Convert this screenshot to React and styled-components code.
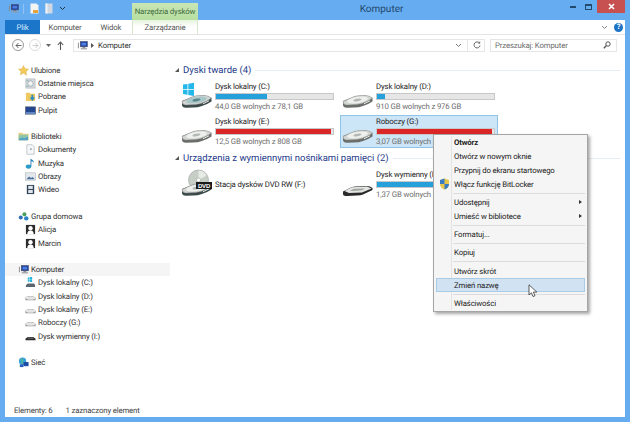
import React from "react";
import styled, { createGlobalStyle } from "styled-components";

const Global = createGlobalStyle`
  html, body { margin: 0; padding: 0; width: 630px; height: 422px; overflow: hidden; }
  * { box-sizing: border-box; }
  body { font-family: Roboto, "Noto Sans", sans-serif; font-size: 7.8px; letter-spacing: -0.15px; color: #333; text-rendering: geometricPrecision; }
`;

const Win = styled.div`
  position: relative; width: 630px; height: 422px; background: #66acf0;
  display: flex; flex-direction: column; padding: 0 5px 5px; overflow: hidden;
`;
const TitleBar = styled.div`display: flex; height: 20px; flex: none; margin-right: 0;`;
const Quick = styled.div`display: flex; align-items: center; width: 127px; padding-left: 3px; padding-bottom: 3px; gap: 6px;`;
const QuickSep = styled.div`width: 1px; height: 10px; background: #8fc3f3; margin-left: -2px;`;
const ToolTab = styled.div`
  width: 66px; height: 17px; margin-top: 3px; background: linear-gradient(#c9e6b4, #b7dfa2);
  color: #3f6a3c; display: flex; align-items: center; justify-content: center; white-space: nowrap;
`;
const Title = styled.div`
  flex: 1; display: flex; justify-content: center; align-items: center; padding-bottom: 2px;
  font-size: 10px; letter-spacing: 0; color: #24486e;
`;
const Controls = styled.div`display: flex; width: 60px; justify-content: flex-end; height: 13px;`;
const Ctl = styled.div`
  width: ${p => p.$w}px; display: flex; align-items: center; justify-content: center;
  background: ${p => p.$bg || "transparent"};
`;
const Ribbon = styled.div`
  display: flex; align-items: stretch; height: 15px; flex: none; background: #fff;
  border-bottom: 1px solid #e4e4e4;
`;
const RTab = styled.div`
  width: ${p => p.$w}px; display: flex; align-items: center; justify-content: center;
  color: ${p => p.$fg || "#555"}; background: ${p => p.$bg || "transparent"};
`;
const CtxTab = styled(RTab)`
  background: linear-gradient(#e6f3dc, #fff 45%);
  border-left: 1px solid #d8e8cc; border-right: 1px solid #d8e8cc;
`;
const RibbonEnd = styled.div`flex: 1; display: flex; justify-content: flex-end; align-items: center; gap: 6px; padding-right: 2px;`;
const Help = styled.div`
  width: 9px; height: 9px; border-radius: 50%; background: #1c72c4; color: #fff; font-size: 7.5px; font-weight: 700;
  display: flex; align-items: center; justify-content: center; line-height: 1;
`;
const AddrRow = styled.div`display: flex; align-items: center; height: 20px; flex: none; background: #fff;`;
const Nav = styled.div`width: 68px; display: flex; align-items: center; padding-left: 7px;`;
const NavCircle = styled.div`
  width: 12px; height: 12px; border-radius: 50%; flex: none; margin-right: 5px;
  border: 1px solid ${p => p.$off ? "#dcdcdc" : "#9a9a9a"};
  display: flex; align-items: center; justify-content: center;
`;
const AddrBox = styled.div`
  width: 412px; height: 13px; border: 1px solid #e6e6e6; display: flex; align-items: center; padding-left: 3px; gap: 3px;
`;
const AddrText = styled.span`color: #333; margin-left: 1px;`;
const AddrEnd = styled.div`margin-left: auto; display: flex; align-items: center; gap: 5px; padding-right: 3px; height: 100%;`;
const AddrSep = styled.div`width: 1px; height: 100%; background: #e6e6e6;`;
const Search = styled.div`
  width: 127px; height: 13px; margin-left: 5px; border: 1px solid #e6e6e6; display: flex; align-items: center;
  justify-content: space-between; padding: 0 5px 0 4px; color: #6d6d6d;
`;
const Main = styled.div`flex: 1; display: flex; background: #fff; min-height: 0;`;
const Side = styled.div`width: 165px; flex: none; padding-top: 8.5px; display: flex; flex-direction: column; gap: 13.3px;`;
const SideGroup = styled.div`display: flex; flex-direction: column;`;
const SideRow = styled.div`
  height: 13.3px; display: flex; align-items: center; gap: 2px;
  padding-left: ${p => p.$child ? 20 : 13}px;
  background: ${p => p.$sel ? "#f5f5f5" : "transparent"};
  color: #333; white-space: nowrap;
`;
const Content = styled.div`flex: 1; padding: 8.5px 5px 0 4px; display: flex; flex-direction: column;`;
const GroupHead = styled.div`
  display: flex; align-items: center; height: 13px; gap: 4px; padding-left: 1px;
  color: #1e3a8a; font-size: 9.5px; letter-spacing: 0; white-space: nowrap;
`;
const Tri = styled.div`width: 0; height: 0; border-left: 4px solid transparent; border-bottom: 4px solid #555;`;
const HeadLine = styled.div`flex: 1; height: 1px; background: #e8edf5;`;
const Grid = styled.div`display: grid; grid-template-columns: 158px 158px; column-gap: 3px; padding: 3px 0 3.5px 5px; row-gap: 2.5px;`;
const Tile = styled.div`
  height: 33px; display: flex; align-items: center; gap: 2px; padding-left: 1px;
  background: ${p => p.$sel ? "#cde6f7" : "transparent"};
  border: 1px solid ${p => p.$sel ? "#8fc4e8" : "transparent"};
`;
const TileText = styled.div`flex: 1; display: flex; flex-direction: column; justify-content: center; gap: 1px; padding-right: 3px;`;
const Name = styled.div`color: #222; line-height: 11px; white-space: nowrap;`;
const Bar = styled.div`width: 119px; height: 7px; background: #e6e6e6; border: 1px solid #c8c8c8; display: flex;`;
const Fill = styled.div`height: 100%; background: ${p => p.$red ? "#da2626" : "#26a0da"};`;
const Sub = styled.div`color: #6d6d6d; line-height: 11px; white-space: nowrap;`;
const Status = styled.div`height: 17px; flex: none; background: #fff; display: flex; align-items: center; padding: 3px 0 0 9px; gap: 13px; color: #444;`;

const Menu = styled.div`
  position: absolute; left: 433px; top: 134px; width: 155px; background: #f5f5f5; border: 1px solid #a5a5a5;
  box-shadow: 2px 2px 3px rgba(0,0,0,.35); padding: 0 2px 1px; display: flex; flex-direction: column; color: #222;
`;
const Gutter = styled.div`position: absolute; left: 17px; top: 1px; bottom: 1px; width: 1px; background: #e3e3e3;`;
const MenuItem = styled.div`
  position: relative; height: 14px; display: flex; align-items: center; padding-left: 18px; white-space: nowrap;
  font-weight: ${p => p.$b ? 700 : 400};
  ${p => p.$hover ? "background: #d1e2f2; outline: 1px solid #a8cbe8; outline-offset: -1px;" : ""}
`;
const MenuSep = styled.div`height: ${p => p.$h || 5}px; display: flex; align-items: center; padding-left: 17px;
  &::after { content: ""; flex: 1; height: 1px; background: #dcdcdc; }
`;
const Arrow = styled.div`
  position: absolute; right: 3px; top: 5px; width: 0; height: 0;
  border-left: 3px solid #333; border-top: 2.5px solid transparent; border-bottom: 2.5px solid transparent;
`;
const Shield = styled.svg`position: absolute; left: 3px; top: 1px;`;
const Cursor = styled.svg`position: absolute; left: 528px; top: 284px;`;

const Drive = ({ kind }) => (
  <svg width="32" height="31" viewBox="0 0 32 31" style={{ flex: "none" }}>
    {kind === "dvd" && <>
      <circle cx="17.500" cy="11" r="10" fill="#c6cec6" stroke="#8a8f8a" strokeWidth=".5" />
      <path d="M17.500 1.500a9.500 9.500 0 0 1 8 5l-8 4.500z" fill="#e6ebe6" />
      <circle cx="17.500" cy="11" r="2" fill="#fff" stroke="#999" strokeWidth=".5" />
    </>}
    {kind === "win" && <g fill="#23b7ea">
      <path d="M2 3.600l4.500-.7v5H2zM7.300 2.700l5.700-.9v6.100H7.300zM2 8.800h4.500v5L2 13.100zM7.300 8.800H13v6.100l-5.700-.9z" />
    </g>}
    {kind === "usb" ? <>
      <path d="M1 22.500 L9 18.500 Q11 17.500 14 17.500 L25 17 Q28 17 30.500 19 L30.500 21 L21 25.500 Q19 26.500 15 26.500 L5 27 Q1 27 1 25Z" fill="#2a2a2a" />
      <path d="M2.500 22 L10 18.300 L25 17.600 L29.500 19.500 L20 23.500 L7 24Z" fill="#e4e6e4" />
      <path d="M8 21.800 L12 19.800 L23 19.400 L20 21.200 L10 22Z" fill="#a2a4a2" />
    </> : <>
      <path d="M1 20 L11 16 Q13 15 16 14.800 L23 14.400 Q27 14.200 30.500 17 L30.500 20.500 Q26 23.500 21 25 Q17 26.500 12 26.500 L5 26.800 Q1 26.500 1 24Z" fill={kind === "win" || kind === "dvd" ? "#3d4a4c" : "#6a6d6a"} />
      <path d="M1 20.500 L11 16 Q13 15 16 14.800 L23 14.400 Q27 14.200 30.500 17 Q26 20.500 20 22.500 Q15 23.800 9 23.800 L5 24 Q1 23.600 1 20.500Z" fill="#d2d5d2" stroke="#8c8f8c" strokeWidth=".4" />
      <ellipse cx="15.500" cy="19" rx="10.500" ry="3" fill={kind === "win" ? "#a7c7c9" : "#eef0ee"} transform="rotate(-9 15.500 19)" />
      <ellipse cx="15.500" cy="19" rx="4" ry="1.300" fill={kind === "win" ? "#5c8387" : "#b4b7b4"} transform="rotate(-9 15.500 19)" />
      <path d="M22 22.800 L28 19.800" stroke="#e4e6e4" strokeWidth="1" />
    </>}
    {kind === "dvd" && <>
      <rect x="15" y="13" width="16" height="7" fill="#1a1a1a" />
      <text x="23" y="18.800" fontSize="6" fontWeight="700" textAnchor="middle" fill="#fff" fontFamily="Liberation Sans">DVD</text>
    </>}
  </svg>
);

const Ico = ({ children, s = 11 }) => (
  <svg width={s} height={s} viewBox="0 0 12 12" style={{ flex: "none" }}>{children}</svg>
);
const PC = () => <Ico><path d="M1 3h1v6H1z" fill="#888" /><rect x="3.500" y="1.500" width="8" height="6" fill="#1d3f9e" stroke="#555" strokeWidth=".5" /><rect x="5" y="3" width="5" height="3" fill="#4f7de0" /><rect x="6" y="8" width="3" height="1" fill="#666" /><rect x="4" y="9" width="7" height="1.200" fill="#999" /></Ico>;
const icons = {
  star: <Ico><path d="M6 .6l1.700 3.500 3.800.5-2.800 2.700.7 3.900L6 8.800l-3.400 1.900.7-3.900L.5 4.600l3.800-.5z" fill="#f3cb5a" stroke="#c99a2c" strokeWidth=".4" /></Ico>,
  recent: <Ico><rect x="1" y="1" width="10" height="10" fill="#d6dbdf" stroke="#8f979e" strokeWidth=".5" /><circle cx="6" cy="6" r="3" fill="#f3f3f3" stroke="#789" strokeWidth=".6" /><path d="M1 3h3M1 9h3" stroke="#7aa" strokeWidth=".7" /></Ico>,
  down: <Ico><path d="M1 2h4l1 1h5v8H1z" fill="#eec95f" /><path d="M7 4v3H5l3 4 3-4H9V4z" fill="#2a8dc0" /></Ico>,
  desk: <Ico><rect x=".5" y="2" width="11" height="8" fill="#23488f" stroke="#445" strokeWidth=".5" /><path d="M1 8h10v1.500H1z" fill="#7da3e0" /></Ico>,
  lib: <Ico><path d="M.5 2h4l1 1h6v7H.5z" fill="#e5cf82" /><path d="M1 4h10l-1 6H.5z" fill="#8fc6ab" /><path d="M1 9l3-2 3 1 4-2v4H1z" fill="#54a3c7" /></Ico>,
  doc: <Ico><path d="M2 .8h6l2 2v8.400H2z" fill="#f5f7f9" stroke="#9aa3ab" strokeWidth=".6" /><path d="M6 4l1.500 1.500L6 7z" fill="#678" /></Ico>,
  music: <Ico><ellipse cx="3.800" cy="9.400" rx="3" ry="2.200" fill="#2b9cc8" /><path d="M6 9V.8c2 1 4 2 3.600 4.700C9 4 8 3.500 7 3.500V9z" fill="#2b7fb8" /></Ico>,
  pics: <Ico><rect x=".5" y="2" width="11" height="8" fill="#e4e8ec" stroke="#9aa3ab" strokeWidth=".5" /><path d="M1.500 9l3-3 2 1.500 2-1L10.500 9z" fill="#476f9a" /></Ico>,
  video: <Ico><rect x="2" y="1" width="8" height="10" fill="#2f4257" /><rect x="3.500" y="2" width="5" height="3.400" fill="#dfe5ea" /><rect x="3.500" y="6.500" width="5" height="3.400" fill="#dfe5ea" /></Ico>,
  home: <Ico><circle cx="3" cy="7" r="2.200" fill="#2f6fb8" /><circle cx="7" cy="3.500" r="2.200" fill="#48a05a" /><circle cx="9" cy="8" r="2.400" fill="#2b84c8" /></Ico>,
  user: <Ico><rect x="1" y="1" width="10" height="10" fill="#2b2b2b" /><circle cx="6" cy="4.600" r="2.400" fill="#fff" /><path d="M2.500 11c0-3 1.500-4 3.500-4s3.500 1 3.500 4z" fill="#fff" /></Ico>,
  pc: <PC />,
  sysd: <Ico><path d="M3 .5l2-.3v2.400H3zM5.500 0l2.300-.2v2.800H5.500zM3 3h2v2.200H3zM5.500 3h2.300v2.400H5.500z" fill="#22b4dc" /><path d="M1 9l2-2h7l1 2v2H1z" fill="#5a6570" /></Ico>,
  disk: <Ico><path d="M.5 8c0-1.500 2-2.500 5.500-2.500s5.500 1 5.500 2.500v2H.5z" fill="#8d8f8d" /><ellipse cx="6" cy="7.600" rx="5.400" ry="2" fill="#e3e4e3" /></Ico>,
  usb: <Ico><path d="M.5 8.500L3 6.500h6l2.500 2v1.500H.5z" fill="#2b2b2b" /><path d="M3 7.400h6v.6H3z" fill="#bbb" /></Ico>,
  net: <Ico><circle cx="5" cy="4.500" r="4" fill="#36a2d6" /><path d="M3 2l2 1-1 3 2 2" stroke="#6fbf5e" fill="none" /><rect x="6" y="5.500" width="5.500" height="4.500" fill="#1e4ba3" /><rect x="2" y="8" width="4" height="3" fill="#255fbf" /></Ico>,
};

const groups = [
  [["star", "Ulubione"], ["recent", "Ostatnie miejsca", 1], ["down", "Pobrane", 1], ["desk", "Pulpit", 1]],
  [["lib", "Biblioteki"], ["doc", "Dokumenty", 1], ["music", "Muzyka", 1], ["pics", "Obrazy", 1], ["video", "Wideo", 1]],
  [["home", "Grupa domowa"], ["user", "Alicja", 1], ["user", "Marcin", 1]],
  [["pc", "Komputer", 0, 1], ["sysd", "Dysk lokalny (C:)", 1], ["disk", "Dysk lokalny (D:)", 1], ["disk", "Dysk lokalny (E:)", 1], ["disk", "Roboczy (G:)", 1], ["usb", "Dysk wymienny (I:)", 1]],
  [["net", "Sieć"]],
];

const hard = [
  { kind: "win", name: "Dysk lokalny (C:)", pct: 44, sub: "44,0 GB wolnych z 78,1 GB" },
  { kind: "hdd", name: "Dysk lokalny (D:)", pct: 7, sub: "910 GB wolnych z 976 GB" },
  { kind: "hdd", name: "Dysk lokalny (E:)", pct: 98, red: 1, sub: "12,5 GB wolnych z 808 GB" },
  { kind: "hdd", name: "Roboczy (G:)", pct: 98, red: 1, sub: "3,07 GB wolnych z 97,6 GB", sel: 1 },
];

const DriveTile = ({ d }) => (
  <Tile $sel={d.sel}>
    <Drive kind={d.kind} />
    <TileText>
      <Name>{d.name}</Name>
      {d.pct != null && <Bar><Fill $red={d.red} style={{ width: `${d.pct}%` }} /></Bar>}
      {d.sub && <Sub>{d.sub}</Sub>}
    </TileText>
  </Tile>
);

const Chevron = ({ c = "#777" }) => <svg width="7" height="5" viewBox="0 0 7 5"><path d="M1 1l2.500 2.500L6 1" fill="none" stroke={c} strokeWidth="1" /></svg>;

export default function App() {
  return (
    <Win>
      <Global />
      <TitleBar>
        <Quick>
          <PC />
          <QuickSep />
          <svg width="9" height="11" viewBox="0 0 9 11"><path d="M.5.5h6l2 2v8h-8z" fill="#f4f4f4" /><path d="M3 7h5v3H3z" fill="#e8a33c" /></svg>
          <svg width="8" height="11" viewBox="0 0 8 11"><path d="M.5.5h7v10h-7z" fill="#cfd8e2" /><path d="M.5.5h2v10h-2z" fill="#eef2f6" /></svg>
          <Chevron c="#234" />
        </Quick>
        <ToolTab>Narzędzia dysków</ToolTab>
        <Title>Komputer</Title>
        <Controls>
          <Ctl $w={15}><svg width="6" height="2"><rect width="6" height="2" fill="#234a6d" /></svg></Ctl>
          <Ctl $w={17}><svg width="7" height="6"><rect x=".5" y=".5" width="6" height="5" fill="none" stroke="#234a6d" /><rect width="7" height="2" fill="#234a6d" /></svg></Ctl>
          <Ctl $w={28} $bg="#c75050"><svg width="7" height="7" viewBox="0 0 7 7"><path d="M1 1l5 5M6 1L1 6" stroke="#fff" strokeWidth="1.600" /></svg></Ctl>
        </Controls>
      </TitleBar>
      <Ribbon>
        <RTab $w={35} $bg="#1b76c9" $fg="#d8eafa">Plik</RTab>
        <RTab $w={50}>Komputer</RTab>
        <RTab $w={42}>Widok</RTab>
        <CtxTab $w={66}>Zarządzanie</CtxTab>
        <RibbonEnd><Chevron c="#8a8a8a" /><Help>?</Help></RibbonEnd>
      </Ribbon>
      <AddrRow>
        <Nav>
          <NavCircle><svg width="7" height="7" viewBox="0 0 7 7"><path d="M6.500 3.500H1M3.500 1L1 3.500 3.500 6" fill="none" stroke="#666" /></svg></NavCircle>
          <NavCircle $off><svg width="7" height="7" viewBox="0 0 7 7"><path d="M.5 3.500H6M3.500 1L6 3.500 3.500 6" fill="none" stroke="#ccc" /></svg></NavCircle>
          <svg width="5" height="3" viewBox="0 0 5 3" style={{ marginRight: 6 }}><path d="M0 0h5L2.500 3z" fill="#666" /></svg>
          <svg width="7" height="9" viewBox="0 0 7 9"><path d="M3.500 9V1.500M.8 4l2.700-3 2.700 3" fill="none" stroke="#555" strokeWidth="1.100" /></svg>
        </Nav>
        <AddrBox>
          <PC />
          <svg width="3" height="5" viewBox="0 0 3 5"><path d="M0 0l3 2.500L0 5z" fill="#555" /></svg>
          <AddrText>Komputer</AddrText>
          <AddrEnd>
            <Chevron />
            <AddrSep />
            <svg width="8" height="8" viewBox="0 0 8 8"><path d="M6.500 2.200A3 3 0 1 0 7 4.500" fill="none" stroke="#666" strokeWidth="1" /><path d="M4.800 2.600h2.400V.2z" fill="#666" /></svg>
          </AddrEnd>
        </AddrBox>
        <Search>
          Przeszukaj: Komputer
          <svg width="8" height="8" viewBox="0 0 8 8"><circle cx="5" cy="3" r="2.200" fill="none" stroke="#555" /><path d="M3.300 4.700L.8 7.200" stroke="#555" strokeWidth="1.300" /></svg>
        </Search>
      </AddrRow>
      <Main>
        <Side>
          {groups.map((g, i) => (
            <SideGroup key={i}>
              {g.map(([ic, label, child, sel]) => (
                <SideRow key={label} $child={child} $sel={sel}>{icons[ic]}{label}</SideRow>
              ))}
            </SideGroup>
          ))}
        </Side>
        <Content>
          <GroupHead><Tri />Dyski twarde (4)<HeadLine /></GroupHead>
          <Grid>{hard.map(d => <DriveTile key={d.name} d={d} />)}</Grid>
          <GroupHead><Tri />Urządzenia z wymiennymi nośnikami pamięci (2)<HeadLine /></GroupHead>
          <Grid>
            <DriveTile d={{ kind: "dvd", name: "Stacja dysków DVD RW (F:)" }} />
            <DriveTile d={{ kind: "usb", name: "Dysk wymienny (I:)", pct: 70, sub: "1,37 GB wolnych z 3,75 GB" }} />
          </Grid>
        </Content>
      </Main>
      <Status><span>Elementy: 6</span><span>1 zaznaczony element</span></Status>
      <Menu>
        <Gutter />
        <MenuItem $b>Otwórz</MenuItem>
        <MenuItem>Otwórz w nowym oknie</MenuItem>
        <MenuItem>Przypnij do ekranu startowego</MenuItem>
        <MenuItem>
          <Shield width="11" height="12" viewBox="0 0 11 12"><path d="M5.500.5l4.500 1.500v4c0 3-2 4.500-4.500 5.500C3 10.500 1 9 1 6V2z" fill="#e8c84a" /><path d="M5.500.5L1 2v4h4.500zM5.500 6v5.500C8 10.500 10 9 10 6z" fill="#3a7cc4" /></Shield>
          Włącz funkcję BitLocker
        </MenuItem>
        <MenuSep $h={4} />
        <MenuItem>Udostępnij<Arrow /></MenuItem>
        <MenuItem>Umieść w bibliotece<Arrow /></MenuItem>
        <MenuSep $h={4} />
        <MenuItem>Formatuj...</MenuItem>
        <MenuSep $h={4} />
        <MenuItem>Kopiuj</MenuItem>
        <MenuSep $h={5} />
        <MenuItem>Utwórz skrót</MenuItem>
        <MenuItem $hover>Zmień nazwę</MenuItem>
        <MenuSep $h={4} />
        <MenuItem>Właściwości</MenuItem>
      </Menu>
      <Cursor width="10" height="14" viewBox="0 0 10 14"><path d="M1 .8V11l2.400-2.200L5 12.500l2-.8-1.600-3.600H8.800z" fill="#fff" stroke="#333" strokeWidth=".8" /></Cursor>
    </Win>
  );
}
